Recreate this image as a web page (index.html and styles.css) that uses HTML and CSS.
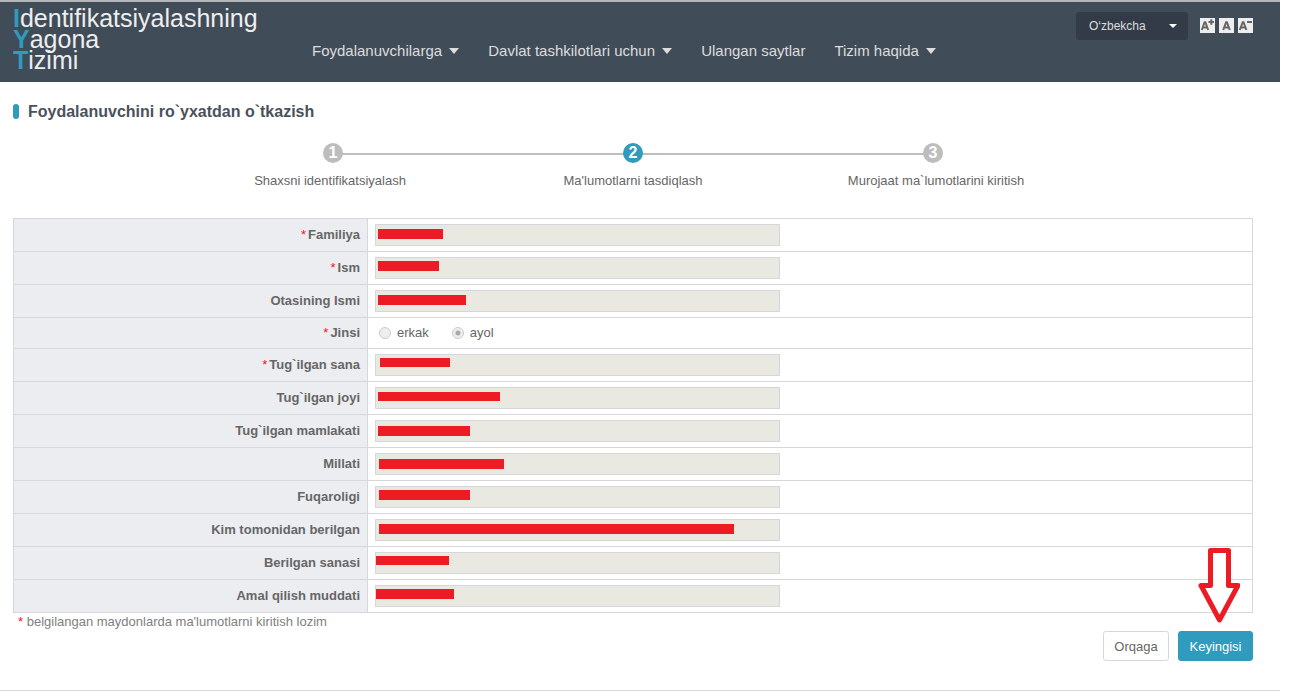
FILE: index.html
```html
<!DOCTYPE html>
<html lang="uz">
<head>
<meta charset="utf-8">
<title>Identifikatsiyalashning Yagona Tizimi</title>
<link rel="stylesheet" href="styles.css">
</head>
<body>
<div class="page">
<header class="header">
  <a class="logo" href="#"><span><b>I</b>dentifikatsiyalashning</span><span><b>Y</b>agona</span><span><b>T</b>izimi</span></a>
  <nav class="nav">
    <a href="#">Foydalanuvchilarga <svg class="caret" viewBox="0 0 10 6"><path d="M0 0h10L5 6z"/></svg></a>
    <a href="#">Davlat tashkilotlari uchun <svg class="caret" viewBox="0 0 10 6"><path d="M0 0h10L5 6z"/></svg></a>
    <a href="#">Ulangan saytlar</a>
    <a href="#">Tizim haqida <svg class="caret" viewBox="0 0 10 6"><path d="M0 0h10L5 6z"/></svg></a>
  </nav>
  <div class="tools">
    <div class="lang">
      <select aria-label="Til"><option>O‘zbekcha</option></select>
      <svg class="lang-caret" viewBox="0 0 8 4"><path d="M0 0h8L4 4z"/></svg>
    </div>
    <div class="sizes">
      <button type="button" aria-label="Kattalashtirish"><svg viewBox="0 0 15 15"><path d="M1.800 12 4.600 4.200h.8L8.200 12M3 9.500h4"/><path d="M8.500 4h5.500M11.300 1.300v5.400"/></svg></button>
      <button type="button" aria-label="Odatiy"><svg viewBox="0 0 15 15"><path d="M4.200 12 7.100 4.200h.8L10.800 12M5.500 9.500h4"/></svg></button>
      <button type="button" aria-label="Kichraytirish"><svg viewBox="0 0 15 15"><path d="M1.800 12 4.700 4.200h.8L8.400 12M3 9.500h4M9 4h5"/></svg></button>
    </div>
  </div>
</header>

<main class="main">
  <h1 class="title">Foydalanuvchini ro`yxatdan o`tkazish</h1>
  <ol class="steps">
    <li><span class="num">1</span>Shaxsni identifikatsiyalash</li>
    <li class="current"><span class="num">2</span>Ma'lumotlarni tasdiqlash</li>
    <li><span class="num">3</span>Murojaat ma`lumotlarini kiritish</li>
  </ol>
  <form>
    <table class="form-table">
      <tr><th><i>*</i><label for="f1">Familiya</label></th><td><div class="field"><input id="f1" type="text" disabled><span class="mask m1"></span></div></td></tr>
      <tr><th><i>*</i><label for="f2">Ism</label></th><td><div class="field"><input id="f2" type="text" disabled><span class="mask m2"></span></div></td></tr>
      <tr><th><label for="f3">Otasining Ismi</label></th><td><div class="field"><input id="f3" type="text" disabled><span class="mask m3"></span></div></td></tr>
      <tr class="radio-row"><th><i>*</i>Jinsi</th><td><div class="radios"><label><input type="radio" name="sex" disabled>erkak</label><label><input type="radio" name="sex" checked disabled>ayol</label></div></td></tr>
      <tr><th><i>*</i><label for="f4">Tug`ilgan sana</label></th><td><div class="field"><input id="f4" type="text" disabled><span class="mask m4"></span></div></td></tr>
      <tr><th><label for="f5">Tug`ilgan joyi</label></th><td><div class="field"><input id="f5" type="text" disabled><span class="mask m5"></span></div></td></tr>
      <tr><th><label for="f6">Tug`ilgan mamlakati</label></th><td><div class="field"><input id="f6" type="text" disabled><span class="mask m6"></span></div></td></tr>
      <tr><th><label for="f7">Millati</label></th><td><div class="field"><input id="f7" type="text" disabled><span class="mask m7"></span></div></td></tr>
      <tr><th><label for="f8">Fuqaroligi</label></th><td><div class="field"><input id="f8" type="text" disabled><span class="mask m8"></span></div></td></tr>
      <tr><th><label for="f9">Kim tomonidan berilgan</label></th><td><div class="field"><input id="f9" type="text" disabled><span class="mask m9"></span></div></td></tr>
      <tr><th><label for="f10">Berilgan sanasi</label></th><td><div class="field"><input id="f10" type="text" disabled><span class="mask m10"></span></div></td></tr>
      <tr><th><label for="f11">Amal qilish muddati</label></th><td><div class="field"><input id="f11" type="text" disabled><span class="mask m11"></span></div></td></tr>
    </table>
    <p class="note"><i>*</i> belgilangan maydonlarda ma'lumotlarni kiritish lozim</p>
    <div class="actions">
      <button class="btn" type="button">Orqaga</button>
      <button class="btn primary" type="submit">Keyingisi</button>
      <svg class="arrow" viewBox="0 0 42 78"><path d="M12.500 4.500h18v35H40L21.500 74 3 39.500h9.500z"/></svg>
    </div>
  </form>
</main>
<footer class="footer"></footer>
</div>
</body>
</html>
```

FILE: styles.css
```css
* { box-sizing: border-box; }
body {
  margin: 0;
  background: #fff;
  color: #666;
  font: 13px/18px "Liberation Sans", Arial, sans-serif;
}
.page { margin-right: 32px; }
i { font-style: normal; font-weight: normal; color: #f0142c; }

.header {
  display: flex;
  height: 82px;
  padding: 0 27px 0 13px;
  border-top: 2px solid #b5b8bb;
  background: #414c59;
}
.logo {
  display: flex;
  flex-direction: column;
  width: 299px;
  padding-top: 6px;
  color: #eee;
  font-size: 25px;
  line-height: 21px;
  text-decoration: none;
}
.logo b { color: #2f9bbd; }
.nav { display: flex; gap: 29px; padding-top: 40px; }
.nav a { color: #ddd; font-size: 15px; text-decoration: none; white-space: nowrap; }
.caret { width: 10px; height: 6px; margin-left: 3px; vertical-align: 2px; fill: #ddd; }
.tools { display: flex; gap: 12px; margin-left: auto; padding-top: 10px; }
.lang { position: relative; width: 112px; height: 28px; }
.lang select {
  appearance: none;
  width: 100%;
  height: 28px;
  padding: 0 13px;
  border: 0;
  border-radius: 3px;
  background: #323b47;
  color: #ddd;
  font: 12px "Liberation Sans", Arial, sans-serif;
}
.lang-caret { position: absolute; right: 11px; top: 12px; width: 8px; height: 4px; fill: #fff; pointer-events: none; }
.sizes { display: flex; gap: 4px; padding-top: 6px; }
.sizes button { width: 15px; height: 15px; padding: 0; border: 0; background: #eee; }
.sizes svg { display: block; width: 15px; height: 15px; fill: none; stroke: #666; stroke-width: 2; }

.main { padding: 20px 27px 0 13px; }
.title {
  display: flex;
  align-items: center;
  gap: 9px;
  margin: 0;
  color: #4b515b;
  font-size: 16px;
  line-height: 19px;
}
.title::before { content: ""; width: 6px; height: 15px; border-radius: 3px; background: #2f9bbd; }

.steps {
  position: relative;
  display: grid;
  grid-template-columns: repeat(3, 303px);
  justify-content: center;
  margin: 22px 0 28px;
  padding: 0;
  list-style: none;
  text-align: center;
}
.steps::before {
  content: "";
  position: absolute;
  left: calc(50% - 300px);
  top: 10px;
  width: 600px;
  height: 2px;
  background: #bdbdbd;
}
.steps li { position: relative; display: flex; flex-direction: column; align-items: center; gap: 9px; }
.num {
  width: 20px;
  height: 20px;
  border-radius: 50%;
  background: #bdbdbd;
  color: #fff;
  font-size: 16px;
  font-weight: bold;
  line-height: 20px;
}
.steps li:first-child .num { margin-left: 6px; }
.steps li:last-child .num { margin-right: 6px; }
.current .num { background: #2f9bbd; }

.form-table { width: 100%; border-collapse: collapse; }
.form-table th, .form-table td { height: 33px; padding: 0 7px; border: 1px solid #d6d7da; }
.form-table th { width: 354px; background: #ecedf1; text-align: right; }
.form-table th i { margin-right: 2px; }
.form-table .radio-row th, .form-table .radio-row td { height: 31px; }
.field { position: relative; width: 405px; }
.field input {
  display: block;
  width: 100%;
  height: 22px;
  padding: 0 5px;
  border: 1px solid #d6d7da;
  background: #eae9e1;
  color: #555;
  font: inherit;
}
.mask { position: absolute; left: 3px; top: 5px; height: 10px; background: #ed1c24; }
.m1 { width: 65px; }
.m2 { top: 4px; width: 61px; }
.m3 { width: 88px; }
.m4 { left: 5px; top: 4px; width: 70px; height: 9px; }
.m5 { width: 122px; height: 9px; }
.m6 { top: 6px; width: 92px; }
.m7 { left: 4px; top: 6px; width: 125px; }
.m8 { left: 4px; top: 4px; width: 91px; }
.m9 { left: 4px; width: 355px; }
.m10 { left: 1px; top: 4px; width: 73px; height: 9px; }
.m11 { left: 1px; top: 4px; width: 78px; }

.radios { display: flex; gap: 23px; padding-left: 4px; }
.radios label { display: flex; align-items: center; gap: 6px; }
.radios input {
  appearance: none;
  width: 12px;
  height: 12px;
  margin: 0;
  border: 1px solid #ccc;
  border-radius: 50%;
  background: #eee;
}
.radios input:checked { background: radial-gradient(circle, #aaa 2px, #eee 3px); }

.note { margin: 0 0 0 5px; color: #808080; }
.actions { position: relative; display: flex; justify-content: flex-end; gap: 9px; }
.btn {
  min-width: 66px;
  height: 30px;
  padding: 0 10px;
  border: 1px solid #d6d7da;
  border-radius: 3px;
  background: #fff;
  color: #666;
  font: 13px "Liberation Sans", Arial, sans-serif;
}
.primary { min-width: 75px; border-color: #2f9bbd; background: #2f9bbd; color: #fff; }
.arrow {
  position: absolute;
  right: 13px;
  bottom: 37px;
  width: 42px;
  height: 78px;
  fill: #fff;
  stroke: #ed1c24;
  stroke-width: 5;
  stroke-linejoin: round;
}
.footer { margin-top: 29px; border-top: 1px solid #d6d7da; }
```
